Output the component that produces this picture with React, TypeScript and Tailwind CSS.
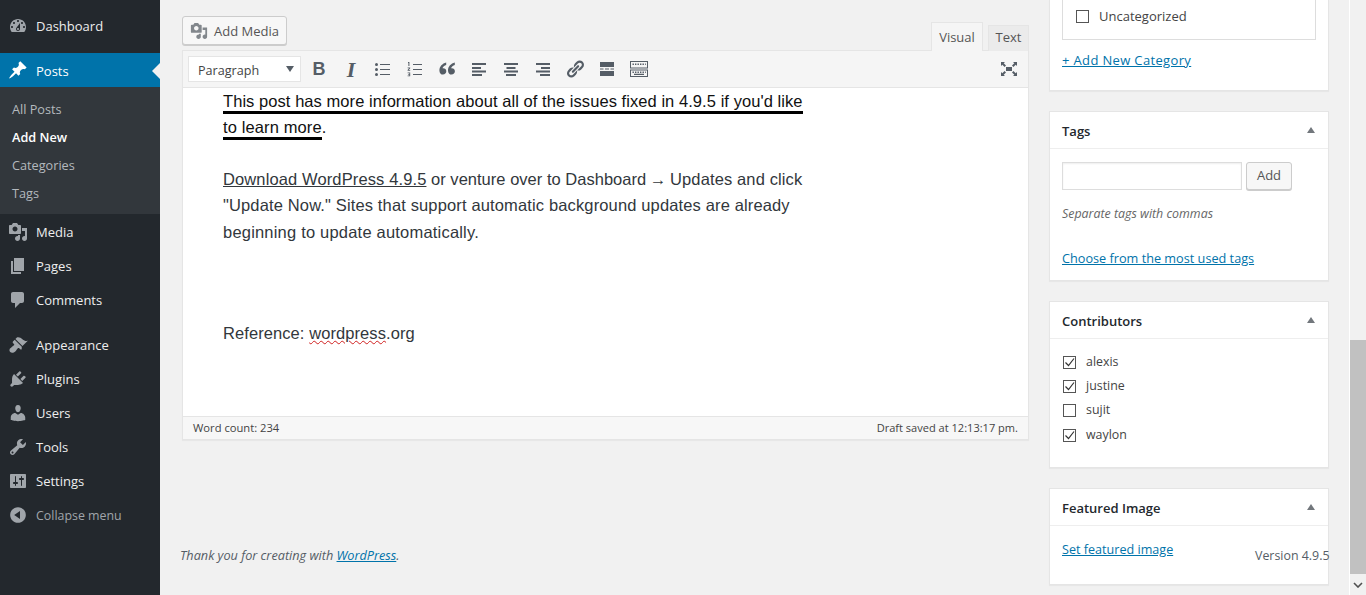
import React from "react";

const P: Record<string, string> = {
  dashboard: "M3.76 16h12.48c1.1-1.37 1.76-3.11 1.76-5 0-4.42-3.58-8-8-8s-8 3.58-8 8c0 1.89.66 3.63 1.76 5zM10 4c.55 0 1 .45 1 1s-.45 1-1 1-1-.45-1-1 .45-1 1-1zM6 6c.55 0 1 .45 1 1s-.45 1-1 1-1-.45-1-1 .45-1 1-1zm8 0c.55 0 1 .45 1 1s-.45 1-1 1-1-.45-1-1 .45-1 1-1zm-5.37 5.55L12 7v6c0 1.1-.9 2-2 2s-2-.9-2-2c0-.57.24-1.08.63-1.45zM4 10c.55 0 1 .45 1 1s-.45 1-1 1-1-.45-1-1 .45-1 1-1zm12 0c.55 0 1 .45 1 1s-.45 1-1 1-1-.45-1-1 .45-1 1-1zm-5 3c0-.55-.45-1-1-1s-1 .45-1 1 .45 1 1 1 1-.45 1-1z",
  pin: "M10.44 3.02l1.82-1.82 6.36 6.35-1.83 1.82c-1.05-.68-2.48-.57-3.41.36l-.75.75c-.92.93-1.04 2.35-.35 3.41l-1.83 1.82-2.41-2.41-2.8 2.79c-.42.42-3.38 2.71-3.8 2.29s1.86-3.39 2.28-3.81l2.79-2.79L4.1 9.36l1.83-1.82c1.05.69 2.48.57 3.4-.36l.75-.75c.93-.92 1.05-2.35.36-3.41z",
  media: "M13 11V4c0-.55-.45-1-1-1h-1.67L9 1H5L3.67 3H2c-.55 0-1 .45-1 1v7c0 .55.45 1 1 1h10c.55 0 1-.45 1-1zM7 4.5c1.38 0 2.5 1.12 2.5 2.5S8.38 9.5 7 9.5 4.5 8.38 4.5 7 5.62 4.5 7 4.5zM14 6h5v10.5c0 1.38-1.12 2.5-2.5 2.5S14 17.88 14 16.5s1.12-2.5 2.5-2.5c.17 0 .34.02.5.05V9h-3V6zm-4 8.05V13h2v3.5c0 1.38-1.12 2.5-2.5 2.5S7 17.88 7 16.5 8.12 14 9.5 14c.17 0 .34.02.5.05z",
  page: "M6 15V2h10v13H6zm-1 1h8v2H3V5h2v11z",
  comments: "M5 2h9c1.1 0 2 .9 2 2v7c0 1.1-.9 2-2 2h-2l-5 5v-5H5c-1.1 0-2-.9-2-2V4c0-1.1.9-2 2-2z",
  appearance: "M14.48 11.06L7.41 3.99l1.5-1.5c.5-.56 2.3-.47 3.51.32 1.21.8 1.43 1.28 2.91 2.1 1.18.64 2.45 1.26 4.45.85zm-.71.71L6.7 4.7 4.93 6.47c-.39.39-.39 1.02 0 1.41l1.06 1.06c.39.39.39 1.03 0 1.42-.6.6-1.43 1.11-2.21 1.69-.35.26-.7.53-1.01.84C1.43 13.23.9 15.66 2.2 17c1.31 1.29 3.73.77 5.08-.59.33-.32.6-.68.87-1.03.55-.77 1.05-1.57 1.66-2.17.39-.39 1.02-.39 1.41 0l1.07 1.07c.39.39 1.02.39 1.41 0z",
  plugins: "M13.11 4.36L9.87 7.6 8 5.73l3.24-3.24c.35-.34 1.05-.2 1.56.32.52.51.66 1.21.31 1.55zm-8 1.77l.91-1.12 9.01 9.01-1.19.84c-.71.71-2.63 1.16-3.82 1.16H6.14L4.9 17.26c-.59.59-1.54.59-2.12 0-.59-.58-.59-1.53 0-2.12l1.24-1.24v-3.88c0-1.13.4-3.19 1.09-3.89zm7.26 3.97l3.24-3.24c.34-.35 1.04-.21 1.55.31.52.51.66 1.21.31 1.55l-3.24 3.25z",
  users: "M10 9.25c-2.27 0-2.73-3.44-2.73-3.44C7 4.02 7.82 2 9.97 2c2.16 0 2.98 2.02 2.71 3.81 0 0-.41 3.44-2.68 3.44zm0 2.57L12.72 10c2.39 0 4.52 2.33 4.52 4.53v2.49s-3.65 1.13-7.24 1.13c-3.65 0-7.24-1.13-7.24-1.13v-2.49c0-2.25 1.94-4.48 4.47-4.48z",
  tools: "M16.68 9.77c-1.34 1.34-3.3 1.67-4.95.99l-5.41 6.52c-.99.99-2.59.99-3.58 0s-.99-2.59 0-3.57l6.52-5.42c-.68-1.65-.35-3.61.99-4.95 1.28-1.28 3.12-1.62 4.72-1.06l-2.89 2.89 2.82 2.82 2.86-2.87c.53 1.58.18 3.39-1.08 4.65zM3.81 16.21c.4.39 1.04.39 1.43 0 .4-.4.4-1.04 0-1.43-.39-.4-1.03-.4-1.43 0-.39.39-.39 1.03 0 1.43z",
  settings: "M18 16V4c0-.55-.45-1-1-1H3c-.55 0-1 .45-1 1v12c0 .55.45 1 1 1h14c.55 0 1-.45 1-1zM8 11h1c.55 0 1 .45 1 1s-.45 1-1 1H8v1.5c0 .28-.22.5-.5.5s-.5-.22-.5-.5V13H6c-.55 0-1-.45-1-1s.45-1 1-1h1V5.5c0-.28.22-.5.5-.5s.5.22.5.5V11zm5-2h-1c-.55 0-1-.45-1-1s.45-1 1-1h1V5.5c0-.28.22-.5.5-.5s.5.22.5.5V7h1c.55 0 1 .45 1 1s-.45 1-1 1h-1v5.5c0 .28-.22.5-.5.5s-.5-.22-.5-.5V9z",
  collapse: "M10 2.16c4.33 0 7.84 3.51 7.84 7.84s-3.51 7.84-7.84 7.84-7.84-3.51-7.84-7.84S5.67 2.16 10 2.16zm2 11.72V6.12L6.18 9.97z",
  link: "M17.74 2.76c1.68 1.69 1.68 4.41 0 6.1l-1.53 1.52c-1.12 1.12-2.7 1.47-4.14 1.09l2.62-2.61.76-.77.76-.76c.84-.84.84-2.2 0-3.04-.84-.85-2.2-.85-3.04 0l-.77.76-3.38 3.38c-.37-1.44-.02-3.02 1.1-4.14l1.52-1.53c1.69-1.68 4.42-1.68 6.1 0zM8.59 13.43l5.34-5.34c.42-.42.42-1.1 0-1.52-.44-.43-1.13-.39-1.53 0l-5.33 5.34c-.42.42-.42 1.1 0 1.52.44.43 1.13.39 1.52 0zm-.76 2.29l4.14-4.15c.38 1.44.03 3.02-1.09 4.14l-1.52 1.53c-1.69 1.68-4.41 1.68-6.1 0-1.68-1.68-1.68-4.42 0-6.1l1.53-1.52c1.12-1.12 2.7-1.47 4.14-1.1l-4.14 4.15c-.85.84-.85 2.2 0 3.05.84.84 2.2.84 3.04 0z",
  expand: "M7 8h6v4H7zm-5 5v4h4l-1.3-1.3L7 13.4 5.6 12l-2.3 2.3L2 13zM2 3v4l1.3-1.3L5.6 8 7 6.6 4.7 4.3 6 3H2zm12 0l1.3 1.3L13 6.6 14.4 8l2.3-2.3L18 7V3h-4zm4 14v-4l-1.3 1.3-2.3-2.3-1.4 1.4 2.3 2.3L14 17h4z",
  quote: "M9.2 3.6C5.4 4.6 2.4 7.6 2.4 11.4c0 2.4 1.5 4.2 3.5 4.2s3.4-1.4 3.4-3.3-1.4-3.1-3-3.1c-.3 0-.6 0-.8.1.4-1.4 2-2.7 3.7-3.2zM17.8 3.6c-3.8 1-6.8 4-6.8 7.8 0 2.4 1.5 4.2 3.5 4.2s3.4-1.4 3.4-3.3-1.4-3.1-3-3.1c-.3 0-.6 0-.8.1.4-1.4 2-2.7 3.7-3.2z",
  alignL: "M3 4h14v2H3zM3 8h9v2H3zM3 11.5h14v2H3zM3 15h10v2H3z",
  alignC: "M3 4h14v2H3zM5.5 8h9v2h-9zM3 11.5h14v2H3zM5 15h10v2H5z",
  alignR: "M3 4h14v2H3zM8 8h9v2H8zM3 11.5h14v2H3zM7 15h10v2H7z",
  ul: "M3.5 4a1.5 1.5 0 1 1 0 3 1.5 1.5 0 0 1 0-3zM3.5 9a1.5 1.5 0 1 1 0 3 1.5 1.5 0 0 1 0-3zM3.5 14a1.5 1.5 0 1 1 0 3 1.5 1.5 0 0 1 0-3zM7 5h10v1H7zM7 10h10v1H7zM7 15h10v1H7z",
  ol: "M8 5h9v1H8zM8 10h9v1H8zM8 15h9v1H8zM3 3h1.4v4H3.4V4H3zM2.6 8.4h2.6v.9L3.8 11h1.4v.8H2.6V11L4 9.2H2.6zM2.6 13.4h2.6v3.8H2.6v-.8h1.7v-.7H3.2v-.7h1.1v-.8H2.6z",
  more: "M3 3h14v5H3zM3 9.5h3.5v1H3zM8 9.5h4v1H8zM13.5 9.5H17v1h-3.5zM3 12h14v5H3z",
  kitchen: "M1 2h18v7.4H1zM2 3v5.4h16V3zM3.5 4.5h1.4V6H3.5zM6 4.5h1.4V6H6zM8.5 4.5h1.4V6H8.5zM11 4.5h1.4V6H11zM13.5 4.5h1.4V6h-1.4zM16 4.5h.8V6H16zM1 10.6h18V18H1zM2 11.6V17h16v-5.4zM3.5 12.6h1.4v1.4H3.5zM6 12.6h1.4v1.4H6zM8.5 12.6h1.4v1.4H8.5zM11 12.6h1.4v1.4H11zM13.5 12.6h1.4v1.4h-1.4zM16 12.6h.8v1.4H16zM5 14.8h10V16H5z",
};

function Ic({ n, className }: { n: string; className?: string }) {
  return (
    <svg viewBox="0 0 20 20" className={className} fill="currentColor" aria-hidden="true">
      <path fillRule="evenodd" d={P[n]} />
    </svg>
  );
}

function MenuItem({ icon, label, mb }: { icon: string; label: string; mb?: boolean }) {
  return (
    <div className={`flex h-[34px] items-center text-[13px] text-[#eeeeee] ${mb ? "mb-[11px]" : ""}`}>
      <Ic n={icon} className="ml-[8px] h-[20px] w-[20px] text-[#a0a5aa]" />
      <span className="ml-[8px] pt-[2px]">{label}</span>
    </div>
  );
}

function SubItem({ label, active }: { label: string; active?: boolean }) {
  return (
    <div className={`flex h-[28px] items-center pl-[12px] pt-[2px] text-[12.7px] ${active ? "font-semibold text-white" : "text-[#b4b9be]"}`}>
      {label}
    </div>
  );
}

function Sidebar() {
  return (
    <aside className="h-full w-[160px] shrink-0 bg-[#23282d] pt-[9px]">
      <div className="mb-[10px]">
        <MenuItem icon="dashboard" label="Dashboard" />
      </div>
      <div className="relative flex h-[34px] items-center bg-[#0073aa] text-[13px] text-white">
        <Ic n="pin" className="ml-[8px] h-[20px] w-[20px] text-white" />
        <span className="ml-[8px] pt-[4px]">Posts</span>
        <div className="absolute right-0 top-[10px] h-0 w-0 border-y-[8px] border-r-[8px] border-y-transparent border-r-[#f1f1f1]" />
      </div>
      <div className="mb-[1px] h-[127px] bg-[#32373c] pt-[8px]">
        <SubItem label="All Posts" />
        <SubItem label="Add New" active />
        <SubItem label="Categories" />
        <SubItem label="Tags" />
      </div>
      <MenuItem icon="media" label="Media" />
      <MenuItem icon="page" label="Pages" />
      <MenuItem icon="comments" label="Comments" mb />
      <MenuItem icon="appearance" label="Appearance" />
      <MenuItem icon="plugins" label="Plugins" />
      <MenuItem icon="users" label="Users" />
      <MenuItem icon="tools" label="Tools" />
      <MenuItem icon="settings" label="Settings" />
      <div className="flex h-[34px] items-center text-[12.4px] text-[#a0a5aa]">
        <Ic n="collapse" className="ml-[8px] h-[20px] w-[20px]" />
        <span className="ml-[8px] pt-[2px]">Collapse menu</span>
      </div>
    </aside>
  );
}

function TB({ n }: { n: string }) {
  return (
    <div className="flex h-[30px] w-[32px] items-center justify-center text-[#555d66]">
      <Ic n={n} className="h-[20px] w-[20px]" />
    </div>
  );
}

function Editor() {
  return (
    <div className="w-[847px]">
      <div className="flex h-[50px] items-start justify-between">
        <button className="mt-[16px] flex h-[29px] w-[105px] items-center rounded-[3px] border border-[#cccccc] bg-[#f7f7f7] pl-[7px] text-[13px] text-[#555555] shadow-[0_1px_0_#cccccc]">
          <Ic n="media" className="h-[18px] w-[18px] text-[#82878c]" />
          <span className="ml-[6px] pt-[2px]">Add Media</span>
        </button>
        <div className="mt-[22px] flex items-end">
          <div className="flex h-[29px] w-[52px] items-center justify-center border border-b-0 border-[#e5e5e5] bg-[#f5f5f5] pt-[1px] text-[13px] text-[#555555]">
            Visual
          </div>
          <div className="ml-[5px] flex h-[26px] w-[41px] items-center justify-center border border-b-0 border-[#e5e5e5] bg-[#ebebeb] pb-[1px] text-[13px] text-[#555555]">
            Text
          </div>
        </div>
      </div>
      <div className="border border-[#e5e5e5] shadow-[0_1px_1px_rgba(0,0,0,0.04)]">
        <div className="flex h-[37px] items-center border-b border-[#e5e5e5] bg-[#f5f5f5] pl-[5px] pr-[9px]">
          <div className="relative flex h-[26px] w-[113px] items-center border border-[#e5e5e5] bg-white pl-[9px] pt-[5px] text-[12.6px] text-[#444444]">
            Paragraph
            <div className="absolute right-[6px] top-[9px] h-0 w-0 border-x-[4px] border-t-[6px] border-x-transparent border-t-[#555d66]" />
          </div>
          <div className="ml-[2px] flex h-[30px] w-[32px] items-center justify-center font-['Liberation_Sans',sans-serif] text-[18px] font-bold text-[#555d66]">B</div>
          <div className="flex h-[30px] w-[32px] items-center justify-center font-['Liberation_Serif',serif] text-[22px] font-bold italic text-[#555d66]">I</div>
          <TB n="ul" />
          <TB n="ol" />
          <TB n="quote" />
          <TB n="alignL" />
          <TB n="alignC" />
          <TB n="alignR" />
          <TB n="link" />
          <TB n="more" />
          <TB n="kitchen" />
          <div className="ml-auto flex text-[#555d66]">
            <Ic n="expand" className="h-[20px] w-[20px]" />
          </div>
        </div>
        <div className="h-[328px] overflow-hidden bg-white pl-[40px] font-['Liberation_Sans',sans-serif] text-[16.5px] leading-[26.4px] text-[#32373c]">
          <p className="w-[620px] text-[#111111]">
            <span className="border-b-[3px] border-black pb-[1px] tracking-[0.06px]">This post has more information about all of the issues fixed in 4.9.5 if you'd like</span>
            <br />
            <span className="border-b-[3px] border-black pb-[1px] tracking-[0.12px]">to learn more</span>.
          </p>
          <p className="mt-[25px] w-[620px]">
            <span className="underline tracking-[0.12px]">Download WordPress 4.9.5</span>
            <span className="tracking-[0.02px]"> or venture over to Dashboard </span>
            <span className="-mx-[1px]">→</span>
            <span className="tracking-[0.12px]"> Updates and click</span>
            <br />
            <span className="tracking-[0.14px]">"Update Now." Sites that support automatic background updates are already</span>
            <br />
            <span className="tracking-[0.2px]">beginning to update automatically.</span>
          </p>
          <p className="mt-[75px] w-[620px] tracking-[0.08px]">
            Reference: <span className="underline decoration-[#d02020] decoration-wavy decoration-1">wordpress</span>.org
          </p>
        </div>
        <div className="flex h-[23px] items-center justify-between border-t border-[#e5e5e5] bg-[#f7f7f7] px-[10px] text-[11.2px] text-[#444444]">
          <span>Word count: 234</span>
          <span className="text-[11.05px]">Draft saved at 12:13:17 pm.</span>
        </div>
      </div>
      <div className="mt-[106px] -ml-[2px] text-[12.7px] italic text-[#555d66]">
        Thank you for creating with <span className="text-[#0073aa] underline">WordPress</span>.
      </div>
    </div>
  );
}

function Check({ on }: { on?: boolean }) {
  return (
    <div className="relative h-[13px] w-[13px] shrink-0 border border-[#555555] bg-white">
      {on && (
        <svg viewBox="0 0 13 13" className="absolute left-[-1px] top-[-1px] h-[13px] w-[13px] text-[#333333]" fill="none" stroke="currentColor" strokeWidth="1.2">
          <path d="M2.5 6.5 5.5 9.5 11 2.5" />
        </svg>
      )}
    </div>
  );
}

function Card({ title, children, className }: { title: string; children: React.ReactNode; className: string }) {
  return (
    <div className={`border border-[#e5e5e5] bg-white shadow-[0_1px_1px_rgba(0,0,0,0.04)] ${className}`}>
      <div className="flex h-[37px] items-center justify-between border-b border-[#eeeeee] pl-[12px] pr-[13px] text-[13px] font-semibold text-[#23282d]">
        <span className="pt-[4px]">{title}</span>
        <div className="h-0 w-0 border-x-[4px] border-b-[6px] border-x-transparent border-b-[#72777c]" />
      </div>
      {children}
    </div>
  );
}

function Contributor({ name, on }: { name: string; on?: boolean }) {
  return (
    <div className="flex h-[24.3px] items-center pl-[1px] text-[12.4px] text-[#444444]">
      <Check on={on} />
      <span className="ml-[10px]">{name}</span>
    </div>
  );
}

function RightCol() {
  return (
    <div className="ml-[20px] flex w-[280px] shrink-0 flex-col">
      <div className="h-[91px] border border-t-0 border-[#e5e5e5] bg-white px-[12px] shadow-[0_1px_1px_rgba(0,0,0,0.04)]">
        <div className="flex h-[40px] w-[254px] border border-t-0 border-[#dddddd] pl-[13px] pt-[10px]">
          <div className="h-[13px] w-[13px] border border-[#555555]" />
          <span className="ml-[10px] text-[13px] leading-[13px] text-[#444444]">Uncategorized</span>
        </div>
        <div className="mt-[11px] text-[13px] tracking-[0.35px] text-[#0073aa] underline">+ Add New Category</div>
      </div>
      <Card title="Tags" className="mt-[20px] h-[170px]">
        <div className="px-[12px] pt-[13px]">
          <div className="flex">
            <div className="h-[28px] w-[180px] border border-[#dddddd] bg-white shadow-[inset_0_1px_2px_rgba(0,0,0,0.07)]" />
            <div className="ml-[4px] flex h-[28px] w-[46px] items-center justify-center rounded-[3px] border border-[#cccccc] bg-[#f7f7f7] text-[13px] text-[#555555] shadow-[0_1px_0_#cccccc]">
              Add
            </div>
          </div>
          <div className="mt-[15px] text-[12.4px] italic text-[#666666]">Separate tags with commas</div>
          <div className="mt-[25px] text-[12.7px] text-[#0073aa] underline">Choose from the most used tags</div>
        </div>
      </Card>
      <Card title="Contributors" className="mt-[20px] h-[167px]">
        <div className="px-[12px] pt-[11px]">
          <Contributor name="alexis" on />
          <Contributor name="justine" on />
          <Contributor name="sujit" />
          <Contributor name="waylon" on />
        </div>
      </Card>
      <Card title="Featured Image" className="mt-[20px] h-[97px]">
        <div className="px-[12px] pt-[15px] text-[12.6px] text-[#0073aa] underline">Set featured image</div>
      </Card>
    </div>
  );
}

export default function App() {
  return (
    <div className="relative flex h-[595px] w-[1366px] overflow-hidden bg-[#f1f1f1] font-['Open_Sans',sans-serif]">
      <Sidebar />
      <main className="flex flex-1 pl-[22px]">
        <Editor />
        <RightCol />
      </main>
      <div className="flex h-full w-[17px] shrink-0 flex-col border-l border-white bg-[#f1f1f1]">
        <div className="h-[340px]" />
        <div className="h-[234px] bg-[#c1c1c1]" />
        <div className="flex flex-1 items-center justify-center text-[#505050]">
          <svg viewBox="0 0 10 6" className="h-[6px] w-[10px]" fill="none" stroke="currentColor" strokeWidth="1.6">
            <path d="M1 1l4 4 4-4" />
          </svg>
        </div>
      </div>
      <div className="absolute left-[1255px] top-[547px] text-[12.4px] text-[#555d66]">Version 4.9.5</div>
    </div>
  );
}
